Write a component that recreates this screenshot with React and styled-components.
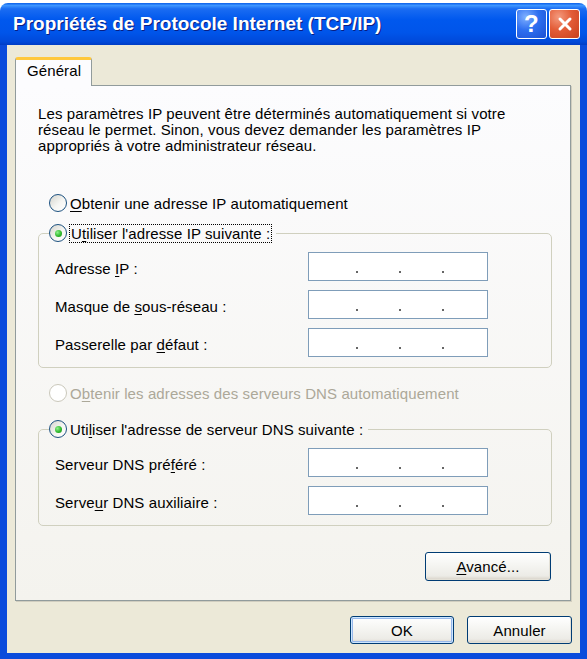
import React from 'react';
import styled, {createGlobalStyle} from 'styled-components';

const GlobalStyle = createGlobalStyle`
  html, body {
    margin: 0;
    padding: 0;
    background: #fff;
  }
  body {
    font-family: "Liberation Sans", Arial, sans-serif;
    font-size: 15px;
    letter-spacing: 0.1px;
    color: #000;
  }
`;

const Window = styled.div`
  margin-top: 3px;
  width: 587px;
  height: 656px;
  display: flex;
  flex-direction: column;
`;

const TitleBar = styled.div`
  flex: none;
  height: 42px;
  display: flex;
  align-items: center;
  justify-content: space-between;
  padding: 0 7px 0 13px;
  border-radius: 8px 8px 0 0;
  background: linear-gradient(to bottom,
    #0a5fea 0%, #3d95ff 6%, #1a6cf2 14%, #0058ee 40%,
    #0055ea 70%, #0049da 92%, #003dc4 100%);
`;

const Title = styled.span`
  color: #fff;
  font-family: "Liberation Sans Narrow", "Liberation Sans", sans-serif;
  font-weight: bold;
  font-size: 19px;
  letter-spacing: 0;
  text-shadow: 1px 1px 0 #0a1e80;
  white-space: nowrap;
`;

const CaptionButtons = styled.div`
  display: flex;
  gap: 2px;
`;

const CaptionButton = styled.div`
  width: 31px;
  height: 30px;
  box-sizing: border-box;
  border: 1px solid #fff;
  border-radius: 3px;
  display: flex;
  align-items: center;
  justify-content: center;
  color: #fff;
  font-weight: bold;
  font-size: 24px;
  background: ${p => p.$close
    ? 'radial-gradient(circle at 30% 25%, #f49a7e 0%, #e35c37 45%, #c8401d 100%)'
    : 'radial-gradient(circle at 30% 25%, #7fb0ff 0%, #2e6ff0 45%, #1c4fd2 100%)'};
`;

const Frame = styled.div`
  flex: 1;
  display: flex;
  flex-direction: column;
  background: #ece9d8;
  border: solid #0a4bdc;
  border-width: 0 7px 6px 7px;
  padding: 12px 8px 9px 8px;
`;

const TabStrip = styled.div`
  display: flex;
  height: 29px;
  margin-bottom: -1px;
  position: relative;
  z-index: 1;
`;

const Tab = styled.div`
  width: 77px;
  box-sizing: border-box;
  display: flex;
  align-items: center;
  padding: 0 0 6px 11px;
  background: #fcfcfe;
  border: 1px solid #919b9c;
  border-top: 3px solid #ffc83c;
  border-bottom: none;
  border-radius: 3px 3px 0 0;
`;

const Panel = styled.div`
  width: 556px;
  height: 516px;
  box-sizing: border-box;
  border: 1px solid #919b9c;
  box-shadow: 1px 1px 0 #d0cdbf;
  padding: 0 17px 0 22px;
  background: linear-gradient(to bottom, #fcfcfe, #f4f3ee);
  display: flex;
  flex-direction: column;
  align-items: flex-start;
`;

const Intro = styled.p`
  margin: 20px 0 0;
  line-height: 16px;
  white-space: nowrap;
`;

const RadioRow = styled.label`
  display: flex;
  align-items: center;
  gap: 3px;
  height: 20px;
  margin: ${p => p.$mt || 0}px 0 0 11px;
  color: ${p => p.$disabled ? '#aca899' : '#000'};
  white-space: nowrap;
`;

const RadioDot = styled.span`
  flex: none;
  width: 18px;
  height: 18px;
  box-sizing: border-box;
  border-radius: 50%;
  border: 1px solid ${p => p.$disabled ? '#cac8bb' : '#1c5180'};
  background: ${p => p.$disabled
    ? '#fff'
    : 'linear-gradient(135deg, #d4d4cd 0%, #f6f6f3 55%, #fff 100%)'};
  display: flex;
  align-items: center;
  justify-content: center;
  &::after {
    content: '';
    display: ${p => p.$checked ? 'block' : 'none'};
    width: 7px;
    height: 7px;
    border-radius: 50%;
    background: radial-gradient(circle at 35% 35%, #8ef08a, #2bb52a 60%, #1c8d1c);
  }
`;

const Focus = styled.span`
  outline: 1px dotted #000;
  outline-offset: 0;
  padding: 0 1px;
  line-height: 17px;
`;

const Acc = styled.u`
  text-underline-offset: 2px;
`;

const Group = styled.fieldset`
  margin: ${p => p.$mt}px 0 0;
  width: 514px;
  box-sizing: border-box;
  padding: 9px 14px 10px 16px;
  border: 1px solid #d0d0bf;
  border-radius: 5px;
`;

const Legend = styled.legend`
  margin-left: -6px;
  padding: 0 5px 0 0;
  & > label {
    margin: 0;
  }
`;

const Fields = styled.div`
  display: grid;
  grid-template-columns: 253px 180px;
  row-gap: 9px;
  align-items: center;
`;

const FieldLabel = styled.span`
  padding-top: 3px;
  white-space: nowrap;
`;

const IpBox = styled.div`
  height: 29px;
  box-sizing: border-box;
  border: 1px solid #7f9db9;
  background: #fff;
  display: flex;
  gap: 41px;
  padding: 18px 0 0 47px;
`;

const Dot = styled.span`
  width: 2px;
  height: 2px;
  background: #666;
`;

const AdvancedRow = styled.div`
  width: 514px;
  display: flex;
  justify-content: flex-end;
  margin-top: 26px;
`;

const Button = styled.button`
  width: ${p => p.$w}px;
  height: ${p => p.$h}px;
  margin-right: ${p => p.$mr || 0}px;
  box-sizing: border-box;
  border: 1px solid #003c74;
  border-radius: 3px;
  font-family: "Liberation Sans", Arial, sans-serif;
  font-size: 15px;
  letter-spacing: 0.1px;
  color: #000;
  padding: 0;
  background: linear-gradient(to bottom, #ffffff 0%, #f6f6f3 40%, #ecebe6 85%, #d6d0c5 100%);
  box-shadow: ${p => p.$default
    ? 'inset 0 0 0 1px #cee7ff, inset 0 0 0 2px #98b8ea'
    : 'inset -1px -1px 0 #e3e0d6'};
`;

const ButtonRow = styled.div`
  display: flex;
  justify-content: flex-end;
  gap: 13px;
  margin-top: 15px;
`;

const IpField = () => (
  <IpBox>
    <Dot/><Dot/><Dot/>
  </IpBox>
);

const CloseGlyph = () => (
  <svg width="16" height="16" viewBox="0 0 16 16">
    <path d="M3 3 L13 13 M13 3 L3 13" stroke="#fff" strokeWidth="3" strokeLinecap="round"/>
  </svg>
);

export default function App() {
  return (
    <>
      <GlobalStyle/>
      <Window>
        <TitleBar>
          <Title>Propriétés de Protocole Internet (TCP/IP)</Title>
          <CaptionButtons>
            <CaptionButton>?</CaptionButton>
            <CaptionButton $close><CloseGlyph/></CaptionButton>
          </CaptionButtons>
        </TitleBar>
        <Frame>
          <TabStrip>
            <Tab>Général</Tab>
          </TabStrip>
          <Panel>
            <Intro>
              Les paramètres IP peuvent être déterminés automatiquement si votre<br/>
              réseau le permet. Sinon, vous devez demander les paramètres IP<br/>
              appropriés à votre administrateur réseau.
            </Intro>

            <RadioRow $mt={39}>
              <RadioDot/>
              <span><Acc>O</Acc>btenir une adresse IP automatiquement</span>
            </RadioRow>

            <Group $mt={10}>
              <Legend>
                <RadioRow>
                  <RadioDot $checked/>
                  <Focus>U<Acc>t</Acc>iliser l'adresse IP suivante :</Focus>
                </RadioRow>
              </Legend>
              <Fields>
                <FieldLabel>Adresse <Acc>I</Acc>P :</FieldLabel>
                <IpField/>
                <FieldLabel>Masque de <Acc>s</Acc>ous-réseau :</FieldLabel>
                <IpField/>
                <FieldLabel>Passerelle par <Acc>d</Acc>éfaut :</FieldLabel>
                <IpField/>
              </Fields>
            </Group>

            <RadioRow $mt={15} $disabled>
              <RadioDot $disabled/>
              <span>O<Acc>b</Acc>tenir les adresses des serveurs DNS automatiquement</span>
            </RadioRow>

            <Group $mt={16}>
              <Legend>
                <RadioRow>
                  <RadioDot $checked/>
                  <span>Uti<Acc>l</Acc>iser l'adresse de serveur DNS suivante :</span>
                </RadioRow>
              </Legend>
              <Fields>
                <FieldLabel>Serveur DNS pré<Acc>f</Acc>éré :</FieldLabel>
                <IpField/>
                <FieldLabel>Serve<Acc>u</Acc>r DNS auxiliaire :</FieldLabel>
                <IpField/>
              </Fields>
            </Group>

            <AdvancedRow>
              <Button $w={126} $h={29} $mr={1}><Acc>A</Acc>vancé...</Button>
            </AdvancedRow>
          </Panel>
          <ButtonRow>
            <Button $w={104} $h={28} $default>OK</Button>
            <Button $w={105} $h={28}>Annuler</Button>
          </ButtonRow>
        </Frame>
      </Window>
    </>
  );
}
